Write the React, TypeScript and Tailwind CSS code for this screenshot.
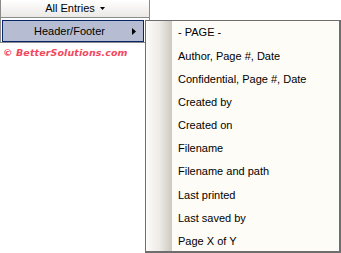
const items = [
  '- PAGE -',
  'Author, Page #, Date',
  'Confidential, Page #, Date',
  'Created by',
  'Created on',
  'Filename',
  'Filename and path',
  'Last printed',
  'Last saved by',
  'Page X of Y',
];

export default function App() {
  return (
    <div
      className="relative w-[341px] h-[253px] overflow-hidden bg-white text-[11px] text-black"
      style={{ fontFamily: '"Liberation Sans", Arial, sans-serif' }}
    >
      {/* All Entries button */}
      <div className="w-[150px] h-[18px] flex items-center justify-center gap-[5px] bg-gradient-to-b from-white to-[#ebe9e6] border-l border-r border-b border-[#8a8a8a]">
        <span>All Entries</span>
        <svg width="5" height="3" viewBox="0 0 5 3">
          <path d="M0 0h5L2.5 3z" fill="#000" />
        </svg>
      </div>

      {/* first level menu */}
      <div className="w-[150px] h-[26px] -mt-px border border-[#8a8a8a] bg-white pt-[2px] pl-[1px]">
        <div className="w-[142px] h-[22px] flex items-center bg-[#b6bdd2] border border-[#0a246a]">
          <span className="flex-1 text-center pl-[4px]">Header/Footer</span>
          <svg width="4" height="7" viewBox="0 0 4 7" className="mr-[7px]">
            <path d="M0 0v7l4-3.5z" fill="#000" />
          </svg>
        </div>
      </div>

      <div
        className="mt-[3px] pl-[3px] font-bold italic text-[#f2485e] text-[9.5px] tracking-[0.1px]"
        style={{ fontFamily: '"DejaVu Sans", Verdana, sans-serif' }}
      >
        © BetterSolutions.com
      </div>

      {/* sub menu */}
      <div className="absolute left-[145px] top-[20px] w-[196px] h-[233px] flex bg-[#fefcf6] border border-r-2 border-b-2 border-[#6e6e6e]">
        <div className="w-[25px] h-full ml-px bg-gradient-to-r from-[#fbfaf8] via-[#eeebe6] to-[#cdc9c0]" />
        <ul className="flex-1 pl-[6px]">
          {items.map((t) => (
            <li key={t} className="h-[23.2px] flex items-center">
              {t}
            </li>
          ))}
        </ul>
      </div>
    </div>
  );
}
